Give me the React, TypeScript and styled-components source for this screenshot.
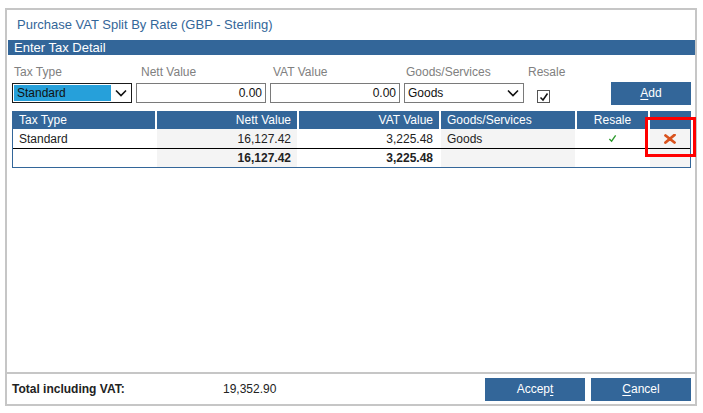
import React from 'react';
import styled, { createGlobalStyle } from 'styled-components';

const GlobalStyle = createGlobalStyle`
  body {
    margin: 0;
    background: #ffffff;
    font-family: "Liberation Sans", Arial, sans-serif;
    font-size: 12px;
    color: #222;
  }
`;

const BLUE = '#336699';

// Dialog frame
const Dialog = styled.div`
  position: relative;
  box-sizing: border-box;
  margin: 8px 0 0 5px;
  width: 692px;
  height: 398px;
  border: 2px solid #c6c6c6;
  display: flex;
  flex-direction: column;
`;

const Title = styled.div`
  height: 30px;
  line-height: 30px;
  padding-left: 10px;
  font-size: 13px;
  color: ${BLUE};
`;

const SectionBar = styled.div`
  height: 15px;
  line-height: 15px;
  margin-left: 1px;
  padding-left: 6px;
  background: ${BLUE};
  color: #fff;
  font-size: 13px;
`;

// Entry form
const Form = styled.div`
  display: grid;
  grid-template-columns: 120px 130px 130px 120px 1fr 80px;
  grid-template-rows: 18px 20px;
  column-gap: 4px;
  row-gap: 2px;
  padding: 8px 4px 0 5px;
`;

const Label = styled.div<{ $indent?: number }>`
  color: #808080;
  padding-left: ${p => p.$indent ?? 2}px;
  line-height: 18px;
`;

const SelectBox = styled.div`
  box-sizing: border-box;
  height: 20px;
  border: 1px solid #7a7a7a;
  display: flex;
  align-items: center;
  padding: 1px 4px 1px 1px;
  background: #fff;
`;

const SelectValue = styled.div<{ $active?: boolean }>`
  flex: 1;
  height: 16px;
  line-height: 16px;
  padding-left: ${p => (p.$active ? 3 : 2)}px;
  margin-right: 4px;
  background: ${p => (p.$active ? '#26a0da' : 'transparent')};
  color: #111;
`;

const ActiveSelect = styled(SelectBox)`
  border-color: #1a1a1a;
`;

const TextInput = styled.div`
  box-sizing: border-box;
  height: 20px;
  line-height: 18px;
  border: 1px solid #7a7a7a;
  padding-right: 3px;
  text-align: right;
  color: #111;
`;

const Check = styled.div`
  box-sizing: border-box;
  width: 13px;
  height: 13px;
  margin: 7px 0 0 9px;
  border: 1px solid #555;
  display: flex;
  align-items: center;
  justify-content: center;
`;

const Button = styled.div<{ $w: number }>`
  box-sizing: border-box;
  width: ${p => p.$w}px;
  height: 23px;
  line-height: 23px;
  background: ${BLUE};
  color: #fff;
  text-align: center;
  font-size: 12px;

  u {
    text-decoration-thickness: 1px;
    text-underline-offset: 2px;
  }
`;

const AddButton = styled(Button)`
  grid-column: 6;
  grid-row: 2;
  margin-top: -1px;
`;

// Table
const Table = styled.div`
  margin: 8px 4px 0 5px;
  border: 1px solid ${BLUE};
  border-top: none;
`;

const Row = styled.div<{ $h: number; $line?: boolean }>`
  display: grid;
  grid-template-columns: 142px 140px 140px 134px 71px 1fr;
  column-gap: 2px;
  height: ${p => p.$h}px;
  border-bottom: ${p => (p.$line ? '1px solid #000' : 'none')};
`;

const HeadCell = styled.div<{ $align?: string }>`
  background: ${BLUE};
  color: #fff;
  line-height: 18px;
  padding: 0 6px;
  text-align: ${p => p.$align ?? 'left'};
`;

const Cell = styled.div<{ $align?: string; $shade?: boolean; $bold?: boolean }>`
  background: ${p => (p.$shade ? '#f4f4f4' : '#fff')};
  padding: 0 6px;
  text-align: ${p => p.$align ?? 'left'};
  font-weight: ${p => (p.$bold ? 700 : 400)};
  display: flex;
  align-items: center;
  justify-content: ${p =>
    p.$align === 'right' ? 'flex-end' : p.$align === 'center' ? 'center' : 'flex-start'};
`;

const Spacer = styled.div`
  flex: 1;
`;

// Footer
const Footer = styled.div`
  height: 30px;
  border-top: 2px solid #c6c6c6;
  display: flex;
  align-items: center;
  padding: 0 4px 0 5px;
`;

const TotalLabel = styled.div`
  width: 211px;
  font-weight: 700;
  color: #222;
`;

const TotalValue = styled.div`
  flex: 1;
  color: #222;
`;

const Buttons = styled.div`
  display: flex;
  gap: 6px;
`;

// Annotation drawn over the delete cell
const Highlight = styled.div`
  position: absolute;
  left: 638px;
  top: 107px;
  width: 51px;
  height: 40px;
  box-sizing: border-box;
  border: 3px solid #ff0000;
`;

const Chevron = () => (
  <svg width="12" height="8" viewBox="0 0 12 8">
    <path d="M1 1.5 L6 6.5 L11 1.5" fill="none" stroke="#111" strokeWidth="1.6" />
  </svg>
);

const Tick = ({ color = '#111', size = 10 }: { color?: string; size?: number }) => (
  <svg width={size} height={size} viewBox="0 0 10 10">
    <path d="M1.5 5.5 L4 8 L8.5 1.5" fill="none" stroke={color} strokeWidth="1.5" />
  </svg>
);

const Cross = () => (
  <svg width="12" height="10" viewBox="0 0 12 10">
    <path d="M1.5 1.5 L10.5 8.5 M10.5 1 L1.5 8.5" fill="none" stroke="#d9531e" strokeWidth="2.8" strokeLinecap="round" />
  </svg>
);

const App: React.FC = () => (
  <>
    <GlobalStyle />
    <Dialog>
      <Title>Purchase VAT Split By Rate (GBP - Sterling)</Title>
      <SectionBar>Enter Tax Detail</SectionBar>

      <Form>
        <Label>Tax Type</Label>
        <Label $indent={5}>Nett Value</Label>
        <Label $indent={3}>VAT Value</Label>
        <Label>Goods/Services</Label>
        <Label $indent={0}>Resale</Label>
        <div />

        <ActiveSelect>
          <SelectValue $active>Standard</SelectValue>
          <Chevron />
        </ActiveSelect>
        <TextInput>0.00</TextInput>
        <TextInput>0.00</TextInput>
        <SelectBox>
          <SelectValue>Goods</SelectValue>
          <Chevron />
        </SelectBox>
        <Check>
          <Tick />
        </Check>
        <AddButton $w={80}>
          <u>A</u>dd
        </AddButton>
      </Form>

      <Table>
        <Row $h={18}>
          <HeadCell>Tax Type</HeadCell>
          <HeadCell $align="right">Nett Value</HeadCell>
          <HeadCell $align="right">VAT Value</HeadCell>
          <HeadCell>Goods/Services</HeadCell>
          <HeadCell $align="center">Resale</HeadCell>
          <HeadCell />
        </Row>
        <Row $h={19} $line>
          <Cell>Standard</Cell>
          <Cell $align="right" $shade>16,127.42</Cell>
          <Cell $align="right">3,225.48</Cell>
          <Cell $shade>Goods</Cell>
          <Cell $align="center">
            <Tick color="#2e9b2e" size={9} />
          </Cell>
          <Cell $align="center" $shade>
            <Cross />
          </Cell>
        </Row>
        <Row $h={18}>
          <Cell />
          <Cell $align="right" $shade $bold>16,127.42</Cell>
          <Cell $align="right" $bold>3,225.48</Cell>
          <Cell $shade />
          <Cell />
          <Cell $shade />
        </Row>
      </Table>

      <Spacer />

      <Footer>
        <TotalLabel>Total including VAT:</TotalLabel>
        <TotalValue>19,352.90</TotalValue>
        <Buttons>
          <Button $w={100}>
            Accep<u>t</u>
          </Button>
          <Button $w={100}>
            <u>C</u>ancel
          </Button>
        </Buttons>
      </Footer>

      <Highlight />
    </Dialog>
  </>
);

export default App;
